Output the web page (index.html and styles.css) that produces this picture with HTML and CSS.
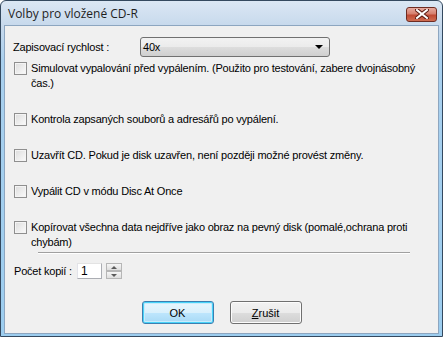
FILE: index.html
```html
<!DOCTYPE html>
<html lang="cs">
<head>
  <meta charset="UTF-8" />
  <title>Volby pro vložené CD-R</title>
  <link rel="stylesheet" href="styles.css">
</head>
<body>
  <div class="window">
    <div class="titlebar">
      <span class="title">Volby pro vložené CD-R</span>
      <button class="close" title="Zavřít">
        <svg width="14" height="10" viewBox="0 0 14 10">
          <path d="M2 1 L12 9 M12 1 L2 9" stroke="#5a1a12" stroke-width="4" stroke-linecap="square"/>
          <path d="M2 1 L12 9 M12 1 L2 9" stroke="#fff" stroke-width="2" stroke-linecap="square"/>
        </svg>
      </button>
    </div>

    <div class="client">
      <div class="speed-row">
        <span class="speed-label">Zapisovací rychlost :</span>
        <div class="select">
          <span>40x</span>
          <span class="arrow"></span>
        </div>
      </div>

      <div class="options">
        <label class="check"><span class="box"></span><span class="text">Simulovat vypalování před vypálením. (Použito pro testování, zabere dvojnásobný čas.)</span></label>
        <label class="check"><span class="box"></span><span class="text">Kontrola zapsaných souborů a adresářů po vypálení.</span></label>
        <label class="check"><span class="box"></span><span class="text">Uzavřít CD. Pokud je disk uzavřen, není později možné provést změny.</span></label>
        <label class="check"><span class="box"></span><span class="text">Vypálit CD v módu Disc At Once</span></label>
        <label class="check"><span class="box"></span><span class="text">Kopírovat všechna data nejdříve jako obraz na pevný disk (pomalé,ochrana proti chybám)</span></label>
      </div>

      <div class="separator"></div>

      <div class="copies">
        <span>Počet kopií :</span>
        <div class="spin-input">1</div>
        <div class="spin">
          <span class="spin-btn"><span class="up"></span></span>
          <span class="spin-btn"><span class="down"></span></span>
        </div>
      </div>

      <div class="buttons">
        <button class="btn default">OK</button>
        <button class="btn"><u>Z</u>rušit</button>
      </div>
    </div>
  </div>
</body>
</html>
```

FILE: styles.css
```css
body {
  margin: 0;
  padding: 0;
  background: #fff;
  font-family: 'Liberation Sans', Arial, sans-serif;
  font-size: 11px;
  letter-spacing: -0.2px;
  color: #000;
}

.window {
  width: 443px;
  height: 337px;
  box-sizing: border-box;
  border: 1px solid #34495f;
  border-radius: 6px 6px 0 0;
  background: linear-gradient(#dbe7f4, #c7d9ec 25px, #a9d0ee 60px, #9ccdef);
  display: flex;
  flex-direction: column;
  padding: 0 3px 2px 3px;
}

.titlebar {
  height: 24px;
  display: flex;
  align-items: center;
  justify-content: space-between;
  flex-shrink: 0;
}

.title {
  font-family: 'Open Sans', 'Noto Sans', sans-serif;
  font-size: 12px;
  letter-spacing: 0;
  color: #1e1e1e;
  padding-left: 4px;
}

.close {
  width: 31px;
  height: 15px;
  margin: 2px 2px 0 0;
  padding: 0;
  border: 1px solid #6e2c22;
  border-radius: 3px;
  background: linear-gradient(#e7aa9e, #d6806f 45%, #c04a34 55%, #cf6d52);
  display: flex;
  align-items: center;
  justify-content: center;
}

.client {
  flex: 1;
  background: #f0f0f0;
  border: 1px solid #8da6c0;
  padding: 11px 0 0 8px;
  overflow: hidden;
}

.speed-row {
  display: flex;
  align-items: center;
  height: 20px;
}

.speed-label {
  width: 127px;
}

.select {
  width: 190px;
  height: 20px;
  box-sizing: border-box;
  border: 1px solid #707070;
  border-radius: 3px;
  background: linear-gradient(#f2f2f2, #ebebeb 50%, #dddddd 51%, #cfcfcf);
  display: flex;
  align-items: center;
  justify-content: space-between;
  padding: 0 6px 0 2px;
}

.arrow {
  width: 0;
  height: 0;
  border-left: 4px solid transparent;
  border-right: 4px solid transparent;
  border-top: 4px solid #000;
}

.options {
  display: flex;
  flex-direction: column;
  gap: 21px;
  margin-top: 4px;
  padding-left: 1px;
}

.check {
  display: flex;
  align-items: flex-start;
  line-height: 15px;
}

.box {
  width: 13px;
  height: 13px;
  box-sizing: border-box;
  border: 1px solid #8f8f8f;
  background: linear-gradient(135deg, #dcdcdc, #fbfbfb);
  box-shadow: inset 0 0 0 1px #f4f4f4;
  flex-shrink: 0;
  margin: 1px 4px 0 0;
}

.text {
  width: 392px;
}

.separator {
  margin: 2px 28px 0 25px;
  border-top: 1px solid #a0a0a0;
  border-bottom: 1px solid #fff;
}

.copies {
  display: flex;
  align-items: center;
  margin-top: 9px;
  padding-left: 1px;
}

.spin-input {
  width: 25px;
  height: 16px;
  box-sizing: border-box;
  margin-left: 5px;
  background: #fff;
  border: 1px solid #abadb3;
  border-top-color: #e3e3e3;
  border-left-color: #e2e3ea;
  padding-left: 3px;
  font-size: 12px;
  line-height: 14px;
}

.spin {
  display: flex;
  flex-direction: column;
  margin-left: 4px;
}

.spin-btn {
  width: 16px;
  height: 8px;
  box-sizing: border-box;
  border: 1px solid #b6b6b6;
  background: linear-gradient(#f6f6f6, #dedede);
  display: flex;
  align-items: center;
  justify-content: center;
}

.up {
  border-left: 3px solid transparent;
  border-right: 3px solid transparent;
  border-bottom: 3px solid #5b5b5b;
}

.down {
  border-left: 3px solid transparent;
  border-right: 3px solid transparent;
  border-top: 3px solid #5b5b5b;
}

.buttons {
  display: flex;
  justify-content: center;
  gap: 16px;
  margin-top: 22px;
  padding-right: 8px;
}

.btn {
  width: 72px;
  height: 23px;
  font-family: 'Liberation Sans', Arial, sans-serif;
  font-size: 11px;
  color: #000;
  border: 1px solid #707070;
  border-radius: 3px;
  background: linear-gradient(#f2f2f2, #ebebeb 50%, #dddddd 51%, #cfcfcf);
  box-shadow: inset 0 0 0 1px #fcfcfc;
  padding: 0;
}

.btn.default {
  border-color: #3c7fb1;
  background: linear-gradient(#eaf6fd, #d9f0fc 50%, #bee6fd 51%, #a7d9f5);
  box-shadow: inset 0 0 0 1px #48d3f9, inset 0 0 0 2px #c8ecfc;
}
```
